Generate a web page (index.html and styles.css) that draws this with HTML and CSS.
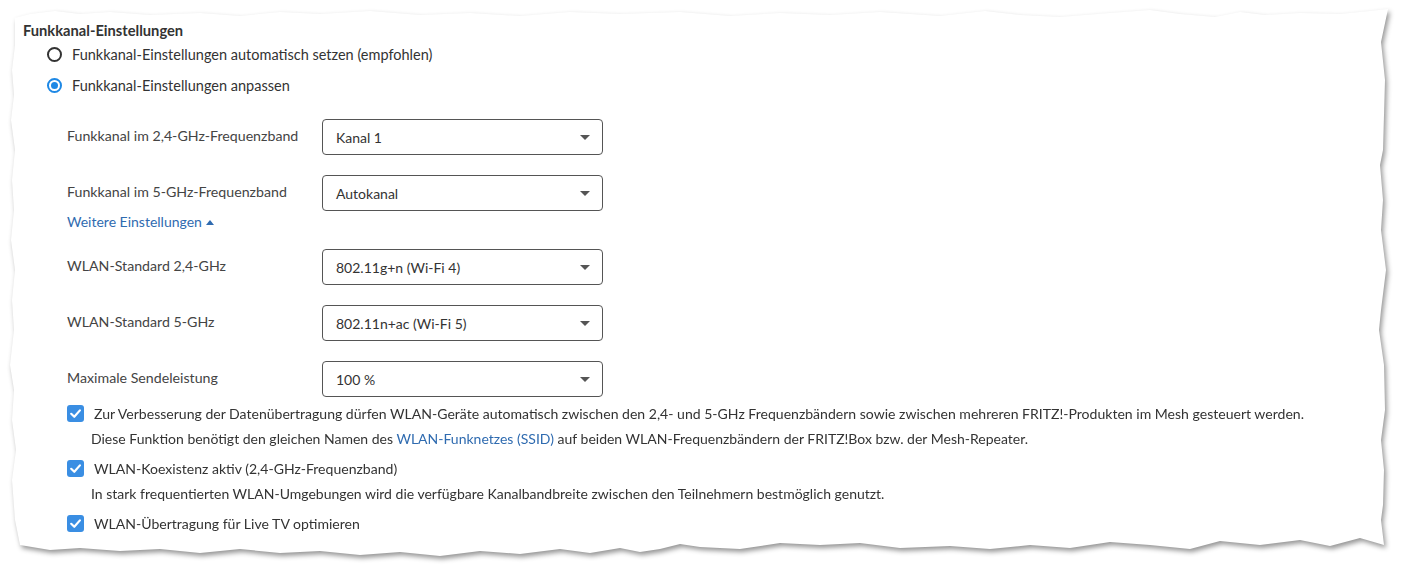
FILE: index.html
```html
<!DOCTYPE html>
<html lang="de">
<head>
<meta charset="utf-8">
<title>Funkkanal-Einstellungen</title>
<link rel="stylesheet" href="styles.css">
</head>
<body>
<div class="sheet">
  <div class="paper">
    <h2 class="heading">Funkkanal-Einstellungen</h2>
    <div class="radios">
      <label class="radio"><span class="radio-dot"></span><span>Funkkanal-Einstellungen automatisch setzen (empfohlen)</span></label>
      <label class="radio"><span class="radio-dot checked"></span><span>Funkkanal-Einstellungen anpassen</span></label>
    </div>
    <div class="form">
      <div class="row">
        <div class="row-label">Funkkanal im 2,4-GHz-Frequenzband</div>
        <div class="select"><span>Kanal 1</span><span class="caret"></span></div>
      </div>
      <div class="row">
        <div class="row-label">Funkkanal im 5-GHz-Frequenzband</div>
        <div class="select"><span>Autokanal</span><span class="caret"></span></div>
      </div>
      <a class="more">Weitere Einstellungen <span class="up"></span></a>
      <div class="row row-after-link">
        <div class="row-label">WLAN-Standard 2,4-GHz</div>
        <div class="select"><span>802.11g+n (Wi-Fi 4)</span><span class="caret"></span></div>
      </div>
      <div class="row">
        <div class="row-label">WLAN-Standard 5-GHz</div>
        <div class="select"><span>802.11n+ac (Wi-Fi 5)</span><span class="caret"></span></div>
      </div>
      <div class="row">
        <div class="row-label">Maximale Sendeleistung</div>
        <div class="select"><span>100 %</span><span class="caret"></span></div>
      </div>
      <div class="checks">
        <div class="check-group">
          <label class="check"><span class="box"><svg viewBox="0 0 17 17" width="17" height="17"><path d="M4.2 8.8 L7.3 11.8 L12.9 5.4" fill="none" stroke="#fff" stroke-width="2.2" stroke-linecap="round" stroke-linejoin="round"/></svg></span><span>Zur Verbesserung der Datenübertragung dürfen WLAN-Geräte automatisch zwischen den 2,4- und 5-GHz Frequenzbändern sowie zwischen mehreren FRITZ!-Produkten im Mesh gesteuert werden.</span></label>
          <p class="desc">Diese Funktion benötigt den gleichen Namen des <a class="link">WLAN-Funknetzes (SSID)</a> auf beiden WLAN-Frequenzbändern der FRITZ!Box bzw. der Mesh-Repeater.</p>
        </div>
        <div class="check-group">
          <label class="check"><span class="box"><svg viewBox="0 0 17 17" width="17" height="17"><path d="M4.2 8.8 L7.3 11.8 L12.9 5.4" fill="none" stroke="#fff" stroke-width="2.2" stroke-linecap="round" stroke-linejoin="round"/></svg></span><span>WLAN-Koexistenz aktiv (2,4-GHz-Frequenzband)</span></label>
          <p class="desc">In stark frequentierten WLAN-Umgebungen wird die verfügbare Kanalbandbreite zwischen den Teilnehmern bestmöglich genutzt.</p>
        </div>
        <div class="check-group">
          <label class="check"><span class="box"><svg viewBox="0 0 17 17" width="17" height="17"><path d="M4.2 8.8 L7.3 11.8 L12.9 5.4" fill="none" stroke="#fff" stroke-width="2.2" stroke-linecap="round" stroke-linejoin="round"/></svg></span><span>WLAN-Übertragung für Live TV optimieren</span></label>
        </div>
      </div>
    </div>
  </div>
</div>
</body>
</html>
```
FILE: styles.css
```css
html, body {
  margin: 0;
  padding: 0;
  background: #ffffff;
}
body {
  width: 1401px;
  height: 566px;
  overflow: hidden;
  font-family: Lato, "Liberation Sans", sans-serif;
  font-size: 14px;
  color: #444;
}
.sheet {
  filter: drop-shadow(2px 3px 2.5px rgba(0, 0, 0, 0.42));
}
.paper {
  box-sizing: border-box;
  width: 1401px;
  height: 566px;
  background: #fff;
  padding: 20px 0 0 23px;
  clip-path: polygon(15px 18px, 30px 14px, 55px 11px, 80px 14px, 110px 12px, 150px 15px, 200px 13px, 240px 16px, 280px 12px, 320px 14px, 370px 11px, 420px 15px, 470px 13px, 520px 16px, 570px 12px, 620px 14px, 680px 12px, 730px 16px, 780px 13px, 830px 15px, 880px 12px, 940px 16px, 985px 11px, 1020px 15px, 1060px 17px, 1110px 13px, 1150px 10px, 1180px 14px, 1215px 17px, 1240px 12px, 1265px 15px, 1300px 13px, 1340px 14px, 1370px 11px, 1388px 9px, 1381px 42px, 1385px 80px, 1383px 150px, 1380px 165px, 1383px 200px, 1381px 230px, 1386px 270px, 1381px 310px, 1379px 330px, 1384px 365px, 1385px 410px, 1381px 440px, 1384px 470px, 1383px 505px, 1381px 520px, 1384px 545px, 1360px 538px, 1330px 546px, 1300px 540px, 1260px 545px, 1220px 541px, 1190px 549px, 1150px 545px, 1110px 542px, 1070px 548px, 1030px 545px, 990px 549px, 950px 546px, 900px 548px, 860px 543px, 820px 545px, 780px 543px, 740px 549px, 700px 547px, 680px 544px, 660px 549px, 640px 552px, 620px 548px, 590px 553px, 560px 549px, 520px 554px, 480px 551px, 440px 556px, 400px 552px, 360px 555px, 320px 551px, 280px 553px, 240px 549px, 200px 553px, 160px 549px, 120px 551px, 80px 548px, 50px 550px, 20px 545px, 15px 520px, 12px 480px, 16px 450px, 12px 420px, 14px 390px, 10px 365px, 14px 330px, 12px 300px, 15px 270px, 11px 240px, 14px 210px, 12px 180px, 15px 150px, 11px 120px, 14px 95px, 12px 70px, 15px 45px);
}
.heading {
  margin: 0;
  font-size: 14.7px;
  line-height: 20px;
  font-weight: 700;
  color: #333;
}
.radios {
  margin-top: -1px;
  padding-left: 24px;
}
.radio {
  display: flex;
  align-items: center;
  height: 31px;
  gap: 10px;
  color: #333;
  font-size: 14.5px;
}
.radio-dot {
  box-sizing: border-box;
  width: 15px;
  height: 15px;
  border: 2px solid #333;
  border-radius: 50%;
  display: flex;
  align-items: center;
  justify-content: center;
}
.radio-dot.checked {
  border-color: #1e88e5;
}
.radio-dot.checked::after {
  content: "";
  width: 7px;
  height: 7px;
  border-radius: 50%;
  background: #1e88e5;
}
.form {
  padding-left: 44px;
  margin-top: 18px;
}
.row {
  display: flex;
  align-items: flex-start;
  height: 36px;
  margin-bottom: 20px;
}
.row-label {
  width: 255px;
  padding-top: 7px;
  line-height: 20px;
  font-size: 14.2px;
  color: #444;
}
.select {
  box-sizing: border-box;
  width: 281px;
  height: 36px;
  border: 1px solid #555;
  border-radius: 4px;
  display: flex;
  align-items: center;
  justify-content: space-between;
  padding: 1px 12px 0 13px;
  color: #333;
}
.caret {
  width: 0;
  height: 0;
  border-left: 5px solid transparent;
  border-right: 5px solid transparent;
  border-top: 5px solid #555;
}
.more {
  display: block;
  margin-top: -19px;
  line-height: 20px;
  color: #2f6bb0;
  margin-bottom: 17px;
}
.up {
  display: inline-block;
  width: 0;
  height: 0;
  border-left: 4.5px solid transparent;
  border-right: 4.5px solid transparent;
  border-bottom: 5px solid #2f6bb0;
  vertical-align: 2px;
  margin-left: 1px;
}
.checks {
  margin-top: -16px;
}
.check-group {
  margin-bottom: 5px;
}
.check {
  display: flex;
  align-items: center;
  height: 25px;
  gap: 10px;
  color: #333;
  font-size: 14.05px;
}
.box {
  width: 17px;
  height: 17px;
  border-radius: 3px;
  background: #3a8ee3;
  display: block;
}
.box svg {
  display: block;
}
.desc {
  margin: 0 0 0 24px;
  line-height: 25px;
  color: #333;
}
.link {
  color: #2f6bb0;
}
```
